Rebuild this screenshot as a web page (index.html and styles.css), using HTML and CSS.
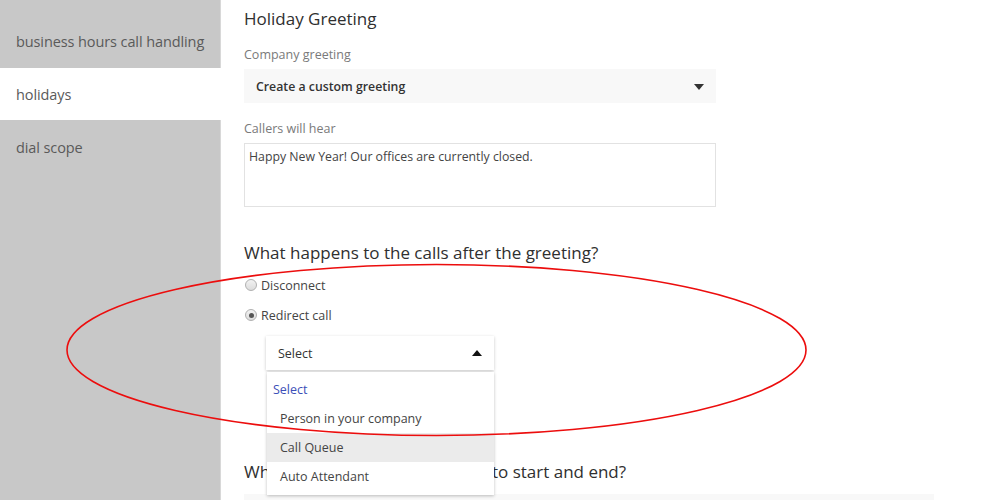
FILE: index.html
```html
<!DOCTYPE html>
<html lang="en">
<head>
<meta charset="utf-8">
<title>Holidays</title>
<link rel="stylesheet" href="styles.css">
</head>
<body>
<div class="page">
  <nav class="sidebar">
    <div class="nav-item">business hours call handling</div>
    <div class="nav-item active">holidays</div>
    <div class="nav-item">dial scope</div>
  </nav>
  <main class="main">
    <h2 class="heading">Holiday Greeting</h2>
    <div class="label first">Company greeting</div>
    <div class="select-box">
      <span>Create a custom greeting</span>
      <span class="arrow-down"></span>
    </div>
    <div class="label">Callers will hear</div>
    <div class="textarea">Happy New Year! Our offices are currently closed.</div>
    <h2 class="heading q">What happens to the calls after the greeting?</h2>
    <div class="radio-row first-radio"><span class="radio"></span><span>Disconnect</span></div>
    <div class="radio-row"><span class="radio checked"></span><span>Redirect call</span></div>
    <div class="dd-wrap">
      <div class="dd-head"><span>Select</span><span class="arrow-up"></span></div>
      <ul class="dd-list">
        <li class="dd-item header">Select</li>
        <li class="dd-item">Person in your company</li>
        <li class="dd-item hover">Call Queue</li>
        <li class="dd-item">Auto Attendant</li>
      </ul>
    </div>
    <h2 class="heading q2">When do you want this holiday to start and end?</h2>
    <div class="wide-bar"></div>
  </main>
</div>
<svg class="annotation" width="999" height="500" viewBox="0 0 999 500">
  <ellipse cx="436.5" cy="350" rx="369.5" ry="85.5" fill="none" stroke="#ec0d0d" stroke-width="1.6"/>
</svg>
</body>
</html>
```
FILE: styles.css
```css
html, body {
  margin: 0;
  padding: 0;
  background: #fff;
  font-family: "Open Sans", "Noto Sans", "Liberation Sans", sans-serif;
  overflow: hidden;
}
.page {
  display: flex;
  height: 500px;
  overflow: hidden;
}
.sidebar {
  width: 221px;
  flex: none;
  background: #c8c8c8;
  border-right: 1px solid #d8d8d8;
  padding-top: 15px;
  box-sizing: border-box;
}
.nav-item {
  height: 52px;
  margin-bottom: 1px;
  display: flex;
  align-items: center;
  padding-left: 16px;
  font-size: 14.5px;
  color: #5a5a5a;
  letter-spacing: -0.1px;
}
.nav-item.active {
  background: #fff;
  margin-right: -1px;
}
.main {
  flex: 1;
  padding: 6px 0 0 23px;
  color: #333;
}
.heading {
  margin: 0;
  font-size: 17px;
  font-weight: 400;
  line-height: 26px;
  color: #2f2f2f;
}
.heading.q { margin-top: 33px; }
.heading.q2 { margin-top: 89px; }
.label {
  margin-top: 17px;
  font-size: 12.5px;
  line-height: 18px;
  color: #7a7a7a;
}
.label.first { margin-top: 14px; }
.select-box {
  margin-top: 5px;
  width: 472px;
  height: 34px;
  background: #f8f8f8;
  display: flex;
  align-items: center;
  justify-content: space-between;
  padding: 0 12px;
  box-sizing: border-box;
  font-size: 12.3px;
  font-weight: 600;
  color: #333;
}
.arrow-down {
  width: 0;
  height: 0;
  border-left: 5.5px solid transparent;
  border-right: 5.5px solid transparent;
  border-top: 6px solid #333;
  margin-top: 2px;
}
.textarea {
  margin-top: 5px;
  width: 472px;
  height: 64px;
  box-sizing: border-box;
  border: 1px solid #e2e2e2;
  padding: 4px 4px;
  font-size: 12.3px;
  line-height: 18px;
  color: #444;
}
.radio-row {
  display: flex;
  align-items: center;
  gap: 4px;
  height: 20px;
  margin-top: 10px;
  font-size: 12.5px;
  color: #444;
  margin-left: 1px;
}
.radio-row.first-radio { margin-top: 9px; }
.radio {
  width: 12px;
  height: 12px;
  box-sizing: border-box;
  border-radius: 50%;
  border: 1px solid #b0b0b0;
  background: linear-gradient(#f2f2f2, #dcdcdc);
  position: relative;
}
.radio.checked::after {
  content: "";
  position: absolute;
  left: 2.5px;
  top: 2.5px;
  width: 5px;
  height: 5px;
  border-radius: 50%;
  background: #555;
}
.dd-wrap {
  position: relative;
  margin-top: 11px;
  margin-left: 22px;
  width: 228px;
}
.dd-head {
  height: 34px;
  background: #fff;
  box-shadow: 0 1px 3px rgba(0,0,0,0.22);
  display: flex;
  align-items: center;
  justify-content: space-between;
  padding: 0 12px;
  font-size: 12.5px;
  font-weight: 500;
  color: #333;
}
.arrow-up {
  width: 0;
  height: 0;
  border-left: 5.5px solid transparent;
  border-right: 5.5px solid transparent;
  border-bottom: 6px solid #111;
}
.dd-list {
  position: absolute;
  top: 36px;
  left: 1px;
  right: 0;
  margin: 0;
  padding: 3px 0 4px;
  list-style: none;
  background: #fff;
  box-shadow: 0 1px 3px rgba(0,0,0,0.25);
  z-index: 2;
}
.dd-item {
  height: 29px;
  line-height: 29px;
  padding-left: 13px;
  font-size: 12.5px;
  color: #444;
}
.dd-item.header {
  padding-left: 6px;
  color: #3c4fb8;
  font-weight: 500;
}
.dd-item.hover { background: #ebebeb; }
.wide-bar {
  margin-top: 9px;
  width: 690px;
  height: 34px;
  background: #f8f8f8;
}
.annotation {
  position: absolute;
  left: 0;
  top: 0;
  pointer-events: none;
  z-index: 5;
}
```
